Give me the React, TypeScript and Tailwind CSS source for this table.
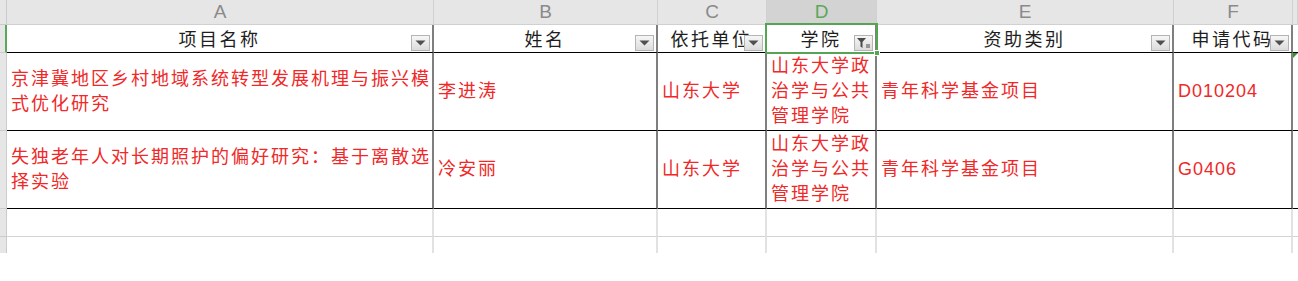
import React from "react"

const font = { fontFamily: '"Liberation Sans", "Noto Sans CJK SC", sans-serif' }

const columns = ["A", "B", "C", "D", "E", "F", ""]
const headers = ["项目名称", "姓名", "依托单位", "学院", "资助类别", "申请代码", ""]

const rows = [
  ["京津冀地区乡村地域系统转型发展机理与振兴模式优化研究", "李进涛", "山东大学", "山东大学政治学与公共管理学院", "青年科学基金项目", "D010204", ""],
  ["失独老年人对长期照护的偏好研究：基于离散选择实验", "冷安丽", "山东大学", "山东大学政治学与公共管理学院", "青年科学基金项目", "G0406", ""],
]

function FilterButton({ active }: { active?: boolean }) {
  return (
    <div className="absolute z-10 right-[2px] bottom-[1px] w-[19px] h-[16px] border border-[#b4b4b4] bg-gradient-to-b from-[#f6f6f6] to-[#dcdcdc] flex items-center justify-center">
      {active ? (
        <svg width="15" height="12" viewBox="0 0 15 12">
          <path d="M1 1h9L6.5 5v6L4.5 9.5V5z" fill="#4a4a4a" />
          <rect x="10" y="7.5" width="4" height="1" fill="#4a4a4a" />
          <rect x="10" y="9.5" width="4" height="1" fill="#4a4a4a" />
        </svg>
      ) : (
        <svg width="11" height="6" viewBox="0 0 11 6">
          <path d="M0.5 0.5h10L5.5 5.5z" fill="#505050" />
        </svg>
      )}
    </div>
  )
}

export default function App() {
  return (
    <div className="w-[1298px] h-[281px] bg-white overflow-hidden" style={font}>
      <div className="grid grid-cols-[7px_427px_224px_109px_110px_297px_119px_5px] grid-rows-[25px_28px_78px_78px_28px_16px]">
        {/* column letters */}
        <div className="bg-[#e6e6e6] border-r border-b border-[#cbcbcb]" />
        {columns.map((c, i) => (
          <div
            key={"c" + i}
            className={`flex items-center justify-center text-[19px] border-r border-b border-[#d0d0d0] ${
              c === "D" ? "bg-[#d3d3d3] text-[#5aa85a]" : "bg-[#e6e6e6] text-[#8a8a8a]"
            }`}
          >
            {c}
          </div>
        ))}

        {/* header row */}
        <div className="bg-[#e6e6e6] border-r-2 border-r-[#5aa85a] border-b border-b-[#cbcbcb]" />
        {headers.map((h, i) => (
          <div
            key={"h" + i}
            className={`relative border-b border-b-black ${i < 6 ? "border-r-2 border-r-[#7f7f7f]" : ""}`}
          >
            <div className="absolute inset-0 flex items-end justify-center pb-[1px] overflow-hidden whitespace-nowrap text-[18px] leading-[22px] tracking-[2.5px] text-[#1e1e1e]">
              {h}
            </div>
            {i < 6 && <FilterButton active={i === 3} />}
            {i === 3 && (
              <div className="absolute z-20 left-[-2px] top-[-2px] right-[-3px] bottom-[-2px] border-2 border-[#55a555]">
                <div className="absolute right-[-4px] bottom-[-4px] w-[6px] h-[6px] bg-[#55a555] border border-white" />
              </div>
            )}
          </div>
        ))}

        {/* data rows */}
        {rows.map((r, ri) => (
          <React.Fragment key={"r" + ri}>
            <div className="bg-[#e6e6e6] border-r border-b border-[#cbcbcb]" />
            {r.map((v, i) => (
              <div
                key={i}
                className={`relative flex items-center pl-[4px] text-[18px] leading-[25px] text-[#f02828] border-b border-b-black ${
                  i === 5 ? "tracking-[1px]" : "tracking-[2px]"
                } ${i < 6 ? "border-r-2 border-r-[#7f7f7f]" : ""}`}
              >
                <span>{v}</span>
                {i === 6 && ri === 0 && (
                  <div className="absolute left-0 top-0 w-0 h-0 border-t-[5px] border-t-[#2e9a2e] border-r-[5px] border-r-transparent" />
                )}
              </div>
            ))}
          </React.Fragment>
        ))}

        {/* empty rows */}
        {[0, 1].map((ri) => (
          <React.Fragment key={"e" + ri}>
            <div className={`bg-[#e6e6e6] border-r border-[#cbcbcb] ${ri === 0 ? "border-b" : ""}`} />
            {columns.map((_, i) => (
              <div
                key={i}
                className={`${i < 6 ? "border-r-2 border-r-[#e2e2e2]" : ""} ${ri === 0 ? "border-b border-b-[#d4d4d4]" : ""}`}
              />
            ))}
          </React.Fragment>
        ))}
      </div>
    </div>
  )
}
